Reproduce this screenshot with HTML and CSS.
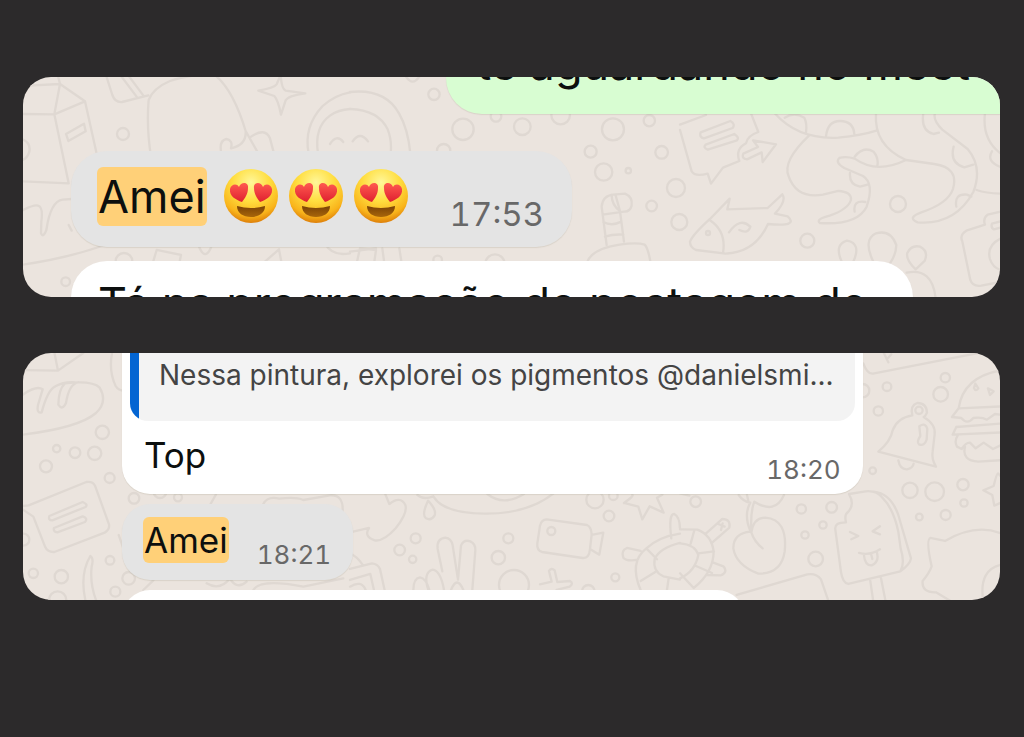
FILE: index.html
```
<!DOCTYPE html>
<html lang="pt-BR">
<head>
  <meta charset="UTF-8">
  <meta name="viewport" content="width=device-width, initial-scale=1.0">
  <title>Feedback - Amei</title>
  <link rel="stylesheet" href="styles.css">
</head>
<body>
  <!-- shared emoji -->
  <svg class="defs" width="0" height="0" aria-hidden="true">
    <defs>
      <radialGradient id="face" cx="50%" cy="25%" r="76%">
        <stop offset="0" stop-color="#fff79a"/>
        <stop offset="0.45" stop-color="#ffde40"/>
        <stop offset="0.8" stop-color="#f9b41b"/>
        <stop offset="1" stop-color="#dc7c08"/>
      </radialGradient>
      <linearGradient id="heart" x1="0" y1="0" x2="0" y2="1">
        <stop offset="0" stop-color="#ff5a4f"/>
        <stop offset="1" stop-color="#df2030"/>
      </linearGradient>
      <linearGradient id="mouth" x1="0" y1="0" x2="0" y2="1">
        <stop offset="0" stop-color="#7a4206"/>
        <stop offset="1" stop-color="#a8660a"/>
      </linearGradient>
      <symbol id="love" viewBox="0 0 54 54">
        <circle cx="27" cy="27" r="27" fill="url(#face)"/>
        <path d="M13 37 Q27 41 41 37 C41 44 35 48 27 48 C19 48 13 44 13 37Z" fill="url(#mouth)"/>
        <path d="M18 33 C12 31 5 27 6 20 C7 15 13 14 15 18 C17 12 25 13 24 19 C24 25 21 29 18 33Z" fill="url(#heart)"/>
        <path d="M36 33 C42 31 49 27 48 20 C47 15 41 14 39 18 C37 12 29 13 30 19 C30 25 33 29 36 33Z" fill="url(#heart)"/>
      </symbol>
    </defs>
  </svg>

  <main class="page">
    <section class="chat chat-large">
      <svg class="doodles" width="977" height="220" viewBox="0 0 977 220" aria-hidden="true">
        <g transform="translate(-3 -7) scale(0.3333)">
          <path d="M0 48 L120 42 L195 94 L103 133 L120 42 L112 10 M0 132 L103 133 L146 340 L0 334 M195 94 L232 260"/>
          <path d="M138 192 L192 161 L197 184 L145 213Z M0 205 Q34 215 28 245 Q22 268 0 272"/>
          <path d="M258 15 L277 75 Q285 98 306 96 L385 76 M301 15 L352 83 M324 15 L372 79"/>
          <path d="M393 260 Q379 170 386 90 Q400 54 450 33 Q520 10 585 15 Q640 60 677 183 Q680 225 633 235 Q640 211 619 207 Q596 212 604 250 M677 183 L712 245 M690 202 Q735 170 750 205 L762 250"/>
          <path d="M782 15 Q785 58 797 62 L856 70 Q804 77 797 91 L783 134 Q775 91 763 78 L715 62 Q762 54 770 43Z"/>
          <path d="M866 250 Q850 170 908 108 Q945 75 990 67 M894 250 Q882 172 930 137 Q955 119 990 117 M930 222 Q950 191 970 216"/>
          <path d="M10 420 Q43 403 54 407 Q70 410 64 455 L63 490 Q70 505 79 480 Q92 393 128 389 L156 387 M0 585 Q130 568 255 525 M146 465 L155 482"/>
          <circle cx="309" cy="192" r="18"/><circle cx="137" cy="635" r="13"/><circle cx="312" cy="574" r="25"/>
          <path d="M398 580 L410 540 L483 555 L478 580 M535 525 Q556 580 576 525 M735 575 L777 538 L785 580 M915 520 Q935 560 990 550"/>
        </g>
        <g transform="translate(327 -7) scale(0.3333)">
          <path d="M0 66 Q105 55 147 130 Q174 176 181 250 M0 117 Q85 120 113 178 Q126 210 122 250 M8 214 Q30 182 54 214 M165 15 Q188 55 211 15"/>
          <circle cx="252" cy="73" r="17"/><circle cx="339" cy="178" r="32"/><circle cx="438" cy="139" r="16"/>
          <circle cx="517" cy="170" r="25"/><circle cx="632" cy="135" r="28"/><circle cx="789" cy="178" r="33"/>
          <circle cx="898" cy="152" r="17"/><circle cx="722" cy="245" r="18"/><circle cx="935" cy="247" r="19"/>
          <circle cx="761" cy="306" r="26"/><circle cx="835" cy="302" r="8"/><circle cx="978" cy="354" r="27"/>
          <circle cx="905" cy="408" r="16"/><circle cx="988" cy="456" r="24"/><circle cx="281" cy="242" r="20"/>
          <circle cx="263" cy="570" r="13"/><circle cx="435" cy="582" r="29"/>
          <path d="M770 525 L755 410 Q758 377 790 374 L825 371 Q849 381 845 407 Q840 426 822 425 L758 434 M797 376 L810 423 L822 515 M785 374 Q785 405 810 423 M760 456 Q785 470 814 455 M765 500 Q790 492 820 494"/>
          <path d="M710 580 Q723 537 809 524 Q861 516 884 524 Q895 535 902 580 M20 580 L30 535 L78 540 L73 575 M97 535 L103 580 M148 535 L155 580 M0 545 L78 535"/>
        </g>
        <g transform="translate(657 -7) scale(0.3333)">
          <path d="M0 164 L78 135 M0 180 L35 304 Q44 321 83 311 L93 341 L129 293 L178 273 Q165 238 198 220 Q202 197 235 186 L213 130"/>
          <path d="M62 187 L151 153 Q167 162 158 174 L72 205 Q57 202 62 187Z M77 224 L163 192 Q179 202 171 211 L83 239 Q68 233 77 224Z M190 251 L234 231 L219 211 L288 223 L248 276 L245 247 L201 268 Q184 266 190 251Z"/>
          <path d="M284 130 Q356 210 475 203 Q545 196 592 181 M314 143 Q343 125 373 143 Q382 161 378 188 M438 199 Q443 153 480 153 Q520 153 523 192 M387 197 Q306 274 326 319 Q350 387 429 374 L475 363 Q515 365 513 390 Q504 418 449 437 Q405 448 420 459 Q532 466 560 410 Q584 341 549 318 L493 294 Q464 277 478 264 Q499 258 524 266 Q590 313 678 270 Q581 226 588 130"/>
          <path d="M524 260 Q550 227 581 245 Q597 265 592 288 M510 309 Q507 344 540 350 L563 344 M524 425 Q518 390 556 396 M678 270 L763 282 Q838 293 819 357 Q805 400 724 427 Q680 443 713 457 Q825 466 880 366 Q909 291 863 237 L787 179 Q758 150 765 130 M730 130 Q722 182 760 192 L777 188 M821 230 Q808 279 853 292 L880 284 M829 410 Q822 370 861 374 L874 380 M890 360 Q921 371 970 371 M915 130 Q905 214 970 256 M936 244 Q917 274 964 292"/>
          <path d="M30 515 Q40 492 90 447 L149 386 L142 418 L263 414 L307 373 Q321 392 285 431 L323 439 Q358 471 264 462 Q226 547 137 551 L48 540 Q30 532 30 515Z M90 451 Q140 485 129 549 M147 487 Q180 440 211 470 Q205 493 178 480"/>
          <circle cx="84" cy="489" r="6"/>
          <circle cx="654" cy="402" r="24"/><circle cx="382" cy="512" r="21"/>
          <path d="M485 575 Q462 523 501 512 Q545 520 520 575 M580 575 Q548 509 588 490 Q632 478 649 525 Q648 555 630 580 M707 598 Q677 570 682 549 Q694 524 720 530 Q747 544 734 573Z M680 608 Q757 592 767 685"/>
          <path d="M970 423 L923 434 Q908 446 915 464 L859 482 Q838 495 847 514 L871 630 Q878 651 904 647 L970 634 M970 452 L936 461 Q932 474 942 478 L970 471 M970 502 Q918 523 930 567 Q939 596 970 602"/>
        </g>
      </svg>

      <div class="messages">
        <p class="message sent">te aguardando no meet</p>
        <div class="message received selected">
          <p class="text"><mark>Amei</mark></p>
          <div class="emojis" role="img" aria-label="😍😍😍">
            <svg class="emoji"><use href="#love"/></svg>
            <svg class="emoji"><use href="#love"/></svg>
            <svg class="emoji"><use href="#love"/></svg>
          </div>
          <time>17:53</time>
        </div>
        <p class="message received next">Tá na programação de postagem de</p>
      </div>
    </section>

    <section class="chat chat-small">
      <svg class="doodles" width="977" height="247" viewBox="0 0 977 247" aria-hidden="true">
        <g transform="translate(-3 -8) scale(0.3333)">
          <path d="M0 75 L114 77 L190 24 M114 77 L103 22 M0 270 Q176 249 228 204 Q264 170 239 128 Q218 106 135 115 Q116 132 115 179 Q127 198 138 174 Q147 116 175 112 M0 155 Q48 119 68 133 L54 180 Q49 207 65 202 Q83 134 106 124 Q130 110 164 112"/>
          <path d="M278 15 Q264 74 287 123 Q296 138 315 137"/>
          <circle cx="247" cy="262" r="20"/><circle cx="110" cy="311" r="11"/><circle cx="165" cy="323" r="16"/>
          <circle cx="224" cy="325" r="20"/><circle cx="78" cy="364" r="18"/><circle cx="269" cy="399" r="15"/>
          <circle cx="342" cy="460" r="16"/><circle cx="420" cy="440" r="19"/><circle cx="474" cy="457" r="12"/>
          <circle cx="10" cy="584" r="18"/><circle cx="40" cy="685" r="14"/><circle cx="124" cy="695" r="20"/>
          <circle cx="270" cy="646" r="13"/><circle cx="286" cy="740" r="15"/><circle cx="326" cy="700" r="19"/><circle cx="113" cy="765" r="26"/>
          <path d="M0 484 L26 481 L199 411 Q218 408 225 422 L267 538 Q270 553 254 563 L103 621 Q83 622 76 607 L40 515 L0 488 M88 513 L188 471 Q205 478 197 486 L97 526 Q84 526 88 513Z M102 549 L188 514 Q205 520 195 531 L112 562 Q99 561 102 549Z"/>
          <path d="M197 770 Q178 688 211 633 Q222 640 215 665 Q209 719 230 770 M570 480 L588 448 M730 477 Q743 452 778 461 Q827 455 850 465 L930 451 Q971 448 968 500 M296 570 L310 610 M370 735 L400 706 M560 715 Q600 739 630 700 Q650 736 680 710 M700 735 Q720 700 850 725 L970 700"/>
        </g>
        <g transform="translate(327 -8) scale(0.3333)">
          <path d="M105 445 L118 477 Q151 451 166 480 Q174 504 137 550 Q100 591 74 586 Q40 574 57 549 L0 562 M202 450 Q220 466 250 454 Q280 505 405 506 Q532 507 610 446 M412 447 Q460 485 522 447 M234 467 Q214 510 228 520 Q244 528 254 511 Q260 494 234 467Z"/>
          <circle cx="197" cy="580" r="15"/><circle cx="149" cy="615" r="16"/><circle cx="188" cy="643" r="11"/>
          <circle cx="475" cy="580" r="15"/><circle cx="445" cy="638" r="20"/><circle cx="735" cy="464" r="26"/>
          <circle cx="777" cy="513" r="16"/><circle cx="790" cy="452" r="13"/><circle cx="796" cy="697" r="12"/><circle cx="715" cy="739" r="19"/><circle cx="492" cy="720" r="45"/>
          <path d="M0 672 L66 655 Q84 657 90 672 L105 740 M0 705 L61 687 L73 740 M0 725 Q34 704 47 735 M0 625 Q23 636 38 660"/>
          <path d="M190 735 Q190 700 210 697 Q228 699 238 735 M235 735 Q218 683 248 674 Q272 677 282 735 M277 679 L263 612 Q259 581 286 578 Q304 580 308 601 L324 704 L333 602 Q341 582 361 589 Q377 596 376 616 L367 735 M303 735 Q321 690 340 735"/>
          <path d="M590 523 L711 540 Q724 545 725 570 L760 563 L748 629 L720 612 Q718 641 698 639 L576 621 Q560 616 562 596 L570 542 Q574 524 590 523Z M725 570 L720 612"/><circle cx="604" cy="558" r="12"/>
          <path d="M570 718 L605 710 L597 678 Q604 667 614 676 L622 711 L660 708 Q672 715 659 725 L620 735 M822 474 Q853 453 847 449 M822 474 L865 485 L877 523 L899 484 L941 503 L921 458 L937 449"/>
          <path d="M990 566 Q928 575 889 610 Q836 652 872 735 M990 594 Q930 609 914 642 Q908 679 940 694 L990 704 M889 610 L921 643 M872 708 L916 681 M956 700 L951 735 M872 618 L831 609 Q812 617 820 638 Q830 650 863 644 M964 580 Q955 505 973 507 Q989 515 990 550"/>
        </g>
        <g transform="translate(657 -8) scale(0.3333)">
          <path d="M0 553 L52 554 Q95 570 101 620 Q100 682 41 729 L0 685 M0 595 Q45 598 55 630 Q45 680 0 700 M43 556 L32 596 M55 625 L102 619 M48 663 L96 684 M75 568 L127 522 Q153 522 148 548 L94 595 M100 653 L130 664 Q145 681 123 691 L80 690 M115 537 L134 545 M128 535 L123 555"/>
          <path d="M176 450 Q190 470 211 473 Q190 510 212 560 Q160 564 160 610 Q168 660 235 686 Q304 687 314 620 Q324 523 256 518 Q221 518 214 562 Q222 589 248 610 M201 450 L205 468 M223 470 Q211 501 214 557 M223 470 Q285 510 312 450 M0 445 L28 452"/>
          <circle cx="47" cy="470" r="16"/><circle cx="364" cy="492" r="14"/><circle cx="455" cy="487" r="16"/>
          <circle cx="429" cy="540" r="11"/><circle cx="375" cy="570" r="11"/><circle cx="407" cy="642" r="22"/>
          <circle cx="621" cy="125" r="13"/><circle cx="595" cy="198" r="14"/><circle cx="548" cy="137" r="20"/>
          <circle cx="796" cy="98" r="14"/><circle cx="782" cy="148" r="22"/><circle cx="578" cy="377" r="10"/>
          <circle cx="690" cy="436" r="23"/><circle cx="764" cy="440" r="28"/><circle cx="849" cy="419" r="17"/>
          <circle cx="852" cy="474" r="11"/><circle cx="797" cy="510" r="15"/><circle cx="718" cy="516" r="10"/>
          <path d="M550 55 Q562 88 579 86 L890 25 M612 25 L625 52 M634 28 L625 38"/>
          <path d="M595 320 Q632 290 638 256 Q652 218 697 211 Q690 181 712 174 Q740 174 741 203 Q736 214 731 216 Q768 238 764 268 L758 320 Q754 342 768 365Z M655 346 Q660 374 681 373 Q699 369 701 356 M718 244 Q737 231 742 252 L740 284 Q733 305 717 298 Q709 291 721 273Z"/><circle cx="717" cy="196" r="11"/>
          <path d="M970 75 Q850 93 836 190 L970 184 M836 190 L816 216 L844 219 Q862 241 880 219 Q905 215 921 224 L945 207 L970 210 M829 246 L970 235 M829 246 L818 269 L970 262 M833 272 Q822 288 831 305 L845 312 Q858 292 870 293 L887 310 L911 293 L939 312 L970 297 M855 306 Q845 347 895 350 L970 345 M886 116 L895 130 Q887 141 882 129Z M924 130 L941 139 L930 150Z"/>
          <path d="M970 402 L954 385 Q950 386 941 423 L910 436 L937 450 L943 482 L970 470"/>
          <path d="M507 447 L557 439 Q590 436 607 458 Q640 490 655 560 L662 610 Q676 655 661 679 L505 717 Q488 714 483 681 L466 553 Q463 532 498 532 Q492 508 505 500 Q525 478 507 447Z M581 440 Q632 445 655 510 L693 640 Q691 657 661 679 M510 561 L535 573 L514 583 M600 544 L578 559 L600 568 M537 624 Q570 633 600 613 M552 631 Q555 662 575 661 Q600 650 590 620 M574 629 L577 642 M571 708 L580 770 M603 699 L617 770"/>
          <path d="M970 568 Q890 532 795 588 L751 579 Q737 584 755 664 Q748 684 728 708 Q724 743 768 742 L815 770 M970 658 Q894 670 910 770 M170 750 L382 688 Q410 684 423 703 L446 770"/>
        </g>
      </svg>

      <div class="messages">
        <div class="message received reply">
          <blockquote>Nessa pintura, explorei os pigmentos @danielsmi...</blockquote>
          <div class="reply-row">
            <p class="text">Top</p>
            <time>18:20</time>
          </div>
        </div>
        <div class="message received selected">
          <p class="text"><mark>Amei</mark></p>
          <time>18:21</time>
        </div>
        <div class="message received next"></div>
      </div>
    </section>
  </main>
</body>
</html>
```
FILE: styles.css
```
* {
  box-sizing: border-box;
}

body {
  margin: 0;
  min-height: 100vh;
  background-color: #2c2a2b;
  color: #0c0f0e;
  font-family: Inter, 'Liberation Sans', sans-serif;
}

p, blockquote {
  margin: 0;
}

.defs {
  position: absolute;
}

.page {
  display: flex;
  flex-direction: column;
  gap: 56px;
  padding: 77px 24px 77px 23px;
}

.chat {
  position: relative;
  overflow: hidden;
  border-radius: 28px;
  background-color: #ebe4de;
}

/* wallpaper behind the messages */
.doodles {
  position: absolute;
  top: 0;
  left: 0;
  fill: none;
  stroke: #dfd8d2;
  stroke-width: 7;
  stroke-linecap: round;
  stroke-linejoin: round;
}

.messages {
  position: relative;
  display: flex;
  flex-direction: column;
  align-items: flex-start;
}

.message {
  background: #ffffff;
  box-shadow: 0 1px 1px rgba(90, 80, 50, 0.12);
  white-space: nowrap;
}

.selected {
  display: flex;
  align-items: flex-end;
  background: #e4e4e4;
}

mark {
  display: block;
  padding: 0 1px;
  border-radius: 6px;
  background: #ffd078;
  color: inherit;
}

time {
  margin-bottom: -8px;
  color: #686868;
  font-variant-numeric: tabular-nums;
}

/* first conversation */
.chat-large .messages {
  padding-left: 48px;
  font-size: 45px;
  line-height: 59px;
}

.chat-large .message {
  border-radius: 36px;
}

.chat-large .sent {
  align-self: flex-end;
  margin-top: -43px;
  margin-bottom: 37px;
  padding: 0 30px 21px;
  border-radius: 0 0 0 36px;
  background: #d8fdd2;
}

.chat-large .selected {
  padding: 16px 28px 21px 26px;
}

.emojis {
  display: flex;
  gap: 11px;
  margin: 0 42px 3px 17px;
}

.emoji {
  width: 54px;
  height: 54px;
}

.chat-large time {
  font-size: 33px;
  line-height: 40px;
}

.chat-large .next {
  margin-top: 14px;
  margin-bottom: -56px;
  padding: 13px 46px 20px 27px;
}

/* second conversation */
.chat-small .messages {
  padding-left: 99px;
  font-size: 35px;
  line-height: 46px;
}

.chat-small .message {
  border-radius: 28px;
}

.chat-small .reply {
  margin-top: -40px;
  padding: 20px 8px 16px;
}

blockquote {
  padding: 25px 21px 29px 29px;
  border-radius: 18px;
  background: linear-gradient(to right, #0465d2 9px, #f3f3f3 9px);
  color: #444444;
  font-size: 28px;
  line-height: 34px;
}

.reply-row {
  display: flex;
  align-items: flex-end;
  justify-content: space-between;
  margin-top: 11px;
  padding: 0 14px;
}

.chat-small time {
  font-size: 26px;
  line-height: 32px;
}

.chat-small .selected {
  margin-top: 10px;
  padding: 13px 22px 17px 21px;
}

.chat-small .selected time {
  margin-left: 28px;
}

.chat-small .next {
  width: 71%;
  height: 60px;
  margin-top: 10px;
  margin-bottom: -50px;
}
```
